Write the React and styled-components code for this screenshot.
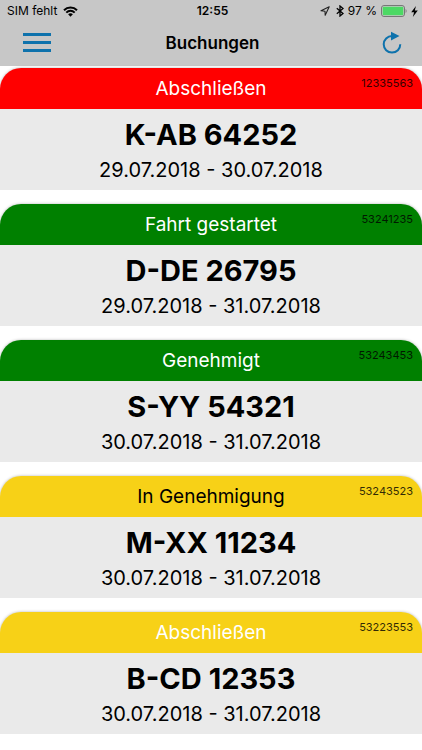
import styled, { createGlobalStyle } from 'styled-components';

const GlobalStyle = createGlobalStyle`
  * {
    box-sizing: border-box;
  }

  body {
    margin: 0;
    background: #fff;
    color: #000;
    font-family: Inter, 'Liberation Sans', sans-serif;
  }
`;

const TopArea = styled.header`
  background: #c7c7c7;
`;

const StatusBar = styled.div`
  display: grid;
  grid-template-columns: 1fr auto 1fr;
  align-items: center;
  height: 22px;
  padding: 0 4px 0 7px;
  font-size: 12px;
  line-height: 22px;
`;

const StatusGroup = styled.div`
  display: flex;
  align-items: center;
  justify-content: ${props => (props.$end ? 'flex-end' : 'flex-start')};
  gap: ${props => (props.$end ? '4px' : '6px')};
`;

const Time = styled.time`
  font-weight: 600;
`;

const NavBar = styled.nav`
  display: grid;
  grid-template-columns: 1fr auto 1fr;
  align-items: center;
  height: 44px;
  padding: 0 18px 2px 21px;
`;

const NavTitle = styled.h1`
  margin: 0;
  font-size: 17px;
  font-weight: 600;
  line-height: 42px;
`;

const IconButton = styled.button`
  display: flex;
  justify-self: ${props => (props.$end ? 'end' : 'start')};
  padding: 0;
  border: 0;
  background: none;
  color: #0e72ac;
  cursor: pointer;
`;

const BookingList = styled.main`
  display: flex;
  flex-direction: column;
  gap: 14px;
  padding: 2px 0 16px;
`;

const Card = styled.article`
  border-radius: 21px 21px 0 0;
  background: #eaeaea;
  box-shadow: 0 0 3px rgba(0, 0, 0, 0.3);
  clip-path: inset(-4px 0 0 0);
  text-align: center;
`;

const CardHeader = styled.div`
  position: relative;
  height: 41px;
  border-radius: 21px 21px 0 0;
  background: ${props => props.$background};
  color: ${props => props.$color};
`;

const Status = styled.p`
  margin: 0;
  font-size: 19px;
  line-height: 41px;
`;

const BookingNumber = styled.span`
  position: absolute;
  top: 7px;
  right: 9px;
  color: #000;
  font-size: 11px;
  line-height: 16px;
  opacity: 0.8;
`;

const CardBody = styled.div`
  height: 81px;
  padding-top: 7px;
`;

const Plate = styled.h2`
  margin: 0;
  font-size: 29px;
  font-weight: 700;
  line-height: 38px;
`;

const Period = styled.p`
  margin: 0;
  font-size: 20px;
  line-height: 32px;
`;

const colors = {
  red: '#ff0000',
  green: '#008000',
  yellow: '#f7d117',
};

const bookings = [
  { id: '12335563', status: 'Abschließen', color: 'red', text: '#fff', plate: 'K-AB 64252', period: '29.07.2018 - 30.07.2018' },
  { id: '53241235', status: 'Fahrt gestartet', color: 'green', text: '#fff', plate: 'D-DE 26795', period: '29.07.2018 - 31.07.2018' },
  { id: '53243453', status: 'Genehmigt', color: 'green', text: '#fff', plate: 'S-YY 54321', period: '30.07.2018 - 31.07.2018' },
  { id: '53243523', status: 'In Genehmigung', color: 'yellow', text: '#000', plate: 'M-XX 11234', period: '30.07.2018 - 31.07.2018' },
  { id: '53223553', status: 'Abschließen', color: 'yellow', text: '#fff', plate: 'B-CD 12353', period: '30.07.2018 - 31.07.2018' },
];

const WifiIcon = () => (
  <svg width="15" height="11" viewBox="0 0 15 11" fill="none" stroke="#000" strokeWidth="2">
    <path d="M1 4.2C4.6 .5 10.4 .5 14 4.2" />
    <path d="M3.3 6.6c2.4-2.4 6-2.4 8.4 0" />
    <path d="M5.1 8.2c1.5-1.2 3.3-1.2 4.8 0L7.5 10.7z" fill="#000" stroke="none" />
  </svg>
);

const LocationIcon = () => (
  <svg width="12" height="10" viewBox="0 0 12 10" fill="none" stroke="#222" strokeWidth="1.1" strokeLinejoin="round">
    <path d="M9.2.8 1 4.7l4 .5.2 4z" />
  </svg>
);

const BluetoothIcon = () => (
  <svg width="8" height="12" viewBox="0 0 8 12" fill="none" stroke="#000" strokeWidth="1.3">
    <path d="M.8 3.3 7 8.5 4 11V1l3 2.5L.8 8.7" />
  </svg>
);

const BatteryIcon = () => (
  <svg width="26" height="12" viewBox="0 0 26 12">
    <rect x=".5" y=".5" width="23" height="11" rx="2.5" fill="none" stroke="#777" />
    <rect x="1.7" y="1.7" width="20.6" height="8.6" rx="1.3" fill="#4cd964" />
    <path d="M24.6 4v4c1.3-.6 1.3-3.4 0-4z" fill="#777" />
  </svg>
);

const BoltIcon = () => (
  <svg width="7" height="11" viewBox="0 0 6 10">
    <path d="M4.3 0 0 5.7h2.6L1.5 10 6 4.1H3.3z" fill="#000" />
  </svg>
);

const MenuIcon = () => (
  <svg width="32" height="24" viewBox="0 0 32 24" fill="currentColor">
    <path d="M2 2h28v3H2zM2 10h28v3H2zM2 18h28v3H2z" />
  </svg>
);

const ReloadIcon = () => (
  <svg width="24" height="24" viewBox="0 0 24 24" fill="none">
    <path d="M12 5a8.3 8.3 0 1 0 8.3 8.3" stroke="currentColor" strokeWidth="2" />
    <path d="M11 .8 19.5 5 11 9.6z" fill="currentColor" />
  </svg>
);

const Booking = ({ booking }) => (
  <Card>
    <CardHeader $background={colors[booking.color]} $color={booking.text}>
      <Status>{booking.status}</Status>
      <BookingNumber>{booking.id}</BookingNumber>
    </CardHeader>
    <CardBody>
      <Plate>{booking.plate}</Plate>
      <Period>{booking.period}</Period>
    </CardBody>
  </Card>
);

export default function App() {
  return (
    <>
      <GlobalStyle />
      <TopArea>
        <StatusBar>
          <StatusGroup>
            <span>SIM fehlt</span>
            <WifiIcon />
          </StatusGroup>
          <Time>12:55</Time>
          <StatusGroup $end>
            <LocationIcon />
            <BluetoothIcon />
            <span>97 %</span>
            <BatteryIcon />
            <BoltIcon />
          </StatusGroup>
        </StatusBar>
        <NavBar>
          <IconButton type="button" aria-label="Menü">
            <MenuIcon />
          </IconButton>
          <NavTitle>Buchungen</NavTitle>
          <IconButton type="button" aria-label="Aktualisieren" $end>
            <ReloadIcon />
          </IconButton>
        </NavBar>
      </TopArea>
      <BookingList>
        {bookings.map(booking => (
          <Booking key={booking.id} booking={booking} />
        ))}
      </BookingList>
    </>
  );
}
